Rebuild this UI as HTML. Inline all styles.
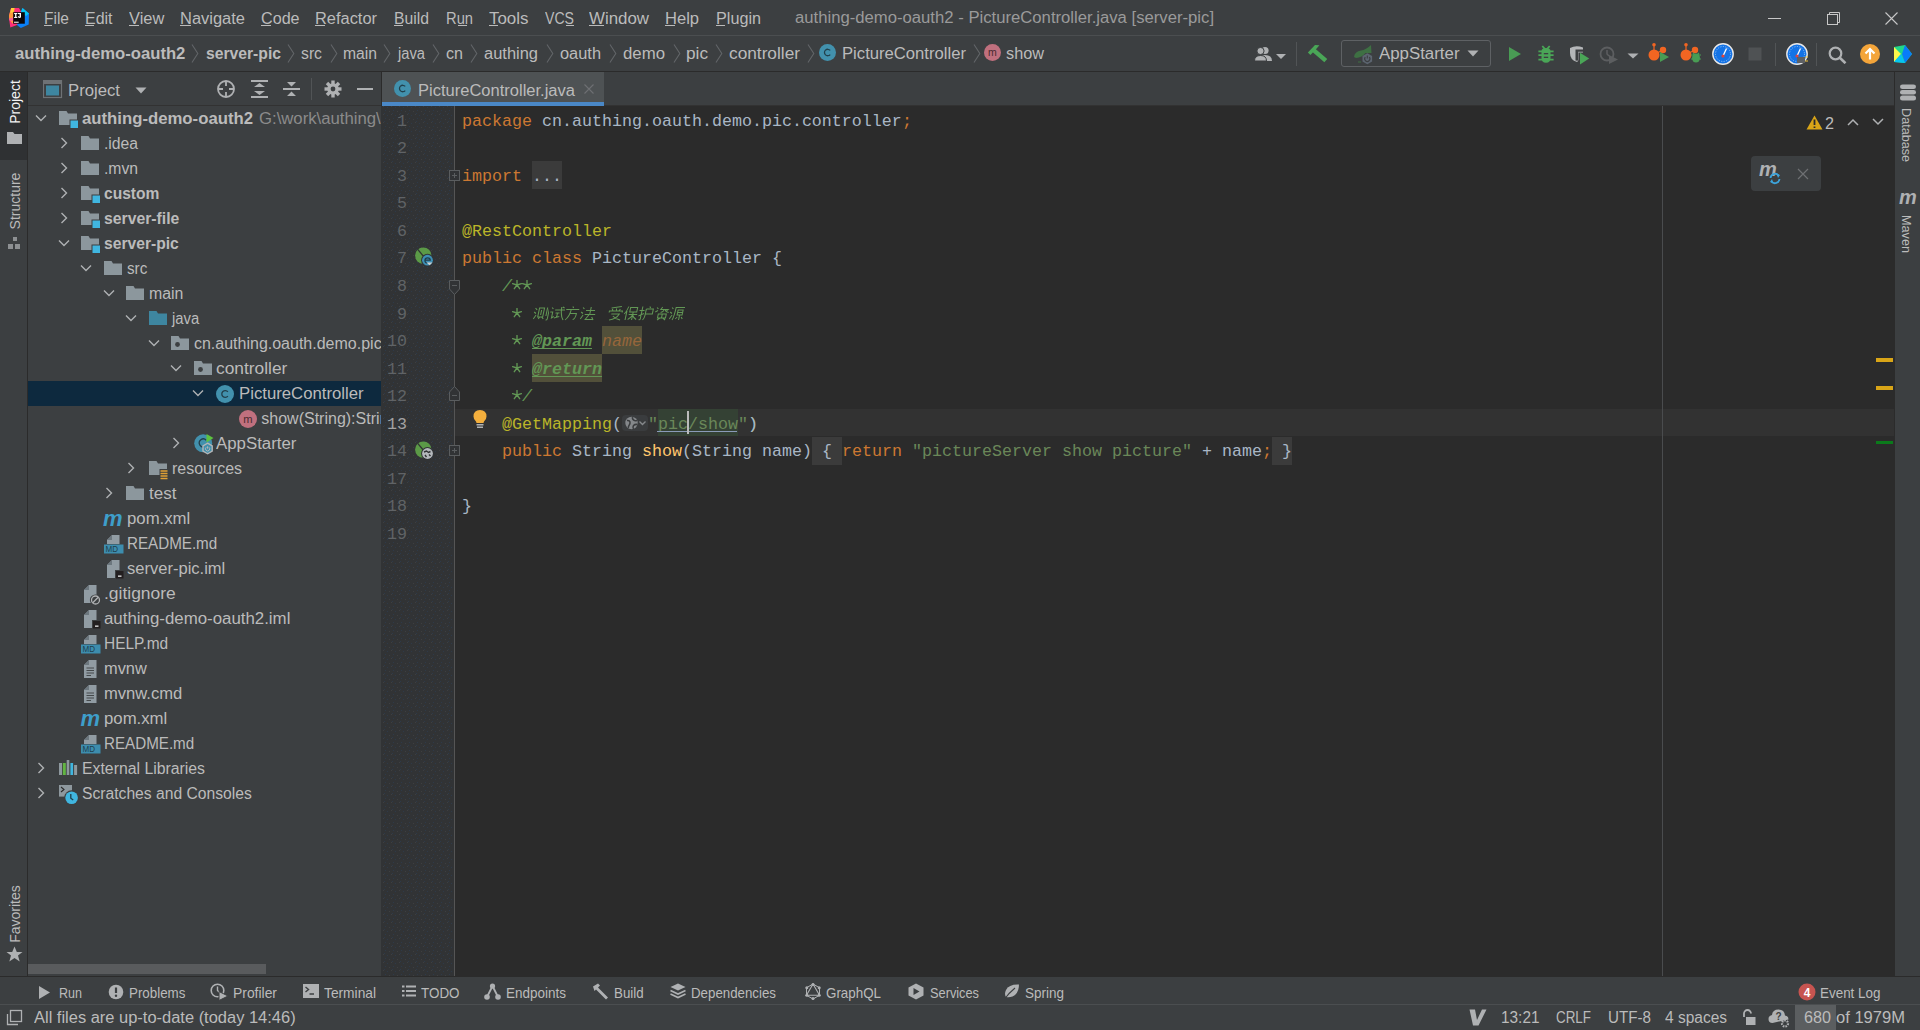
<!DOCTYPE html><html><head><meta charset="utf-8"><style>
*{margin:0;padding:0}
html,body{width:1920px;height:1030px;overflow:hidden;background:#3C3F41}
.t{position:absolute;white-space:pre;transform-origin:0 0}
</style></head><body>
<div style="position:absolute;left:0px;top:0px;width:1920px;height:1030px;background:#3C3F41;"></div>
<div style="position:absolute;left:0px;top:35px;width:1920px;height:1px;background:#4B4E50;"></div>
<div style="position:absolute;left:0px;top:71px;width:1920px;height:1px;background:#2B2B2B;"></div>
<div style="position:absolute;left:0px;top:72px;width:27px;height:88px;background:#2F3133;"></div>
<div style="position:absolute;left:27px;top:72px;width:1px;height:905px;background:#2B2B2B;"></div>
<div style="position:absolute;left:28px;top:105px;width:353px;height:1px;background:#323232;"></div>
<div style="position:absolute;left:381px;top:72px;width:1px;height:34px;background:#2B2B2B;"></div>
<div style="position:absolute;left:382px;top:72px;width:222px;height:30px;background:#4E5254;"></div>
<div style="position:absolute;left:382px;top:102px;width:222px;height:4px;background:#4A88C7;"></div>
<div style="position:absolute;left:604px;top:105px;width:1290px;height:1px;background:#323232;"></div>
<div style="position:absolute;left:381px;top:106px;width:73px;height:870px;background:#313335;"></div>
<svg style="position:absolute;left:383px;top:106px;" width="70" height="870" viewBox="0 0 70 870"><defs><pattern id="gd" width="8" height="8" patternUnits="userSpaceOnUse"><rect x="0" y="0" width="1" height="1" fill="#3E3F41"/><rect x="4" y="1" width="1" height="1" fill="#2E3A49"/><rect x="2" y="4" width="1" height="1" fill="#2E3A49"/><rect x="6" y="5" width="1" height="1" fill="#3E3F41"/><rect x="1" y="7" width="1" height="1" fill="#2E3A49"/></pattern></defs><rect width="70" height="870" fill="url(#gd)"/></svg>
<div style="position:absolute;left:454px;top:106px;width:1px;height:870px;background:#555555;"></div>
<div style="position:absolute;left:455px;top:106px;width:1439px;height:870px;background:#2B2B2B;"></div>
<div style="position:absolute;left:455px;top:409px;width:1439px;height:27px;background:#323232;"></div>
<div style="position:absolute;left:1662px;top:106px;width:1px;height:870px;background:#4A4C4E;"></div>
<div style="position:absolute;left:1894px;top:72px;width:1px;height:905px;background:#2B2B2B;"></div>
<div style="position:absolute;left:0px;top:976px;width:1920px;height:1px;background:#2B2B2B;"></div>
<div style="position:absolute;left:0px;top:1004px;width:1920px;height:1px;background:#4B4E50;"></div>
<div style="position:absolute;left:28px;top:964px;width:238px;height:10px;background:#595B5D;"></div>
<svg style="position:absolute;left:4px;top:4px;" width="30" height="28" viewBox="0 0 30 28">
<polygon points="7.1,4.1 15,4.1 17.5,8.2 17,21 13,21 6.3,23.6 5.2,15.5 5,11.4" fill="#FE2E7A"/>
<polygon points="7.1,4.1 11,4.1 9.8,9 9,20 5.2,15.5 5,11.4" fill="#FF9B3B"/>
<polygon points="7.2,4.1 10,4.1 9.5,8 6.5,9" fill="#FFCF3A"/>
<polygon points="5.2,14.5 8.8,13.5 9,17 5.2,16.5" fill="#FF3FC0" opacity="0.7"/>
<polygon points="18.5,4.1 25,9.5 24.7,20.4 16.8,23.9 13,21 16.8,8.2" fill="#0A80F8"/>
<polygon points="18.5,4.1 25,9.5 22,12 16.8,8.2" fill="#07C3F2"/>
<rect x="9.2" y="8.2" width="11.6" height="11.5" fill="#0C0708"/>
<g fill="#fff"><rect x="10.1" y="9" width="3.2" height="1.1"/><rect x="11.1" y="9" width="1.3" height="5"/><rect x="10.1" y="12.9" width="3.2" height="1.1"/><rect x="13.9" y="9" width="3" height="1.1"/><rect x="15.6" y="9" width="1.4" height="4.2"/><path d="M13.8 12.2H15V12.8H15.6V12.5H17Q17 14 15.4 14Q13.8 14 13.8 12.2Z"/></g>
<rect x="10" y="17.7" width="4.7" height="1.05" fill="#fff"/>
</svg>
<div class="t" id="t0" style="left:44px;top:11px;font-size:16px;line-height:16px;color:#BBBBBB;font-weight:normal;font-family:'Liberation Sans', sans-serif;transform:scaleX(0.9697);">File</div>
<div class="t" id="t1" style="left:85px;top:11px;font-size:16px;line-height:16px;color:#BBBBBB;font-weight:normal;font-family:'Liberation Sans', sans-serif;transform:scaleX(0.9972);">Edit</div>
<div class="t" id="t2" style="left:128.75px;top:11px;font-size:16px;line-height:16px;color:#BBBBBB;font-weight:normal;font-family:'Liberation Sans', sans-serif;transform:scaleX(1.0250);">View</div>
<div class="t" id="t3" style="left:180px;top:11px;font-size:16px;line-height:16px;color:#BBBBBB;font-weight:normal;font-family:'Liberation Sans', sans-serif;transform:scaleX(1.0292);">Navigate</div>
<div class="t" id="t4" style="left:261px;top:11px;font-size:16px;line-height:16px;color:#BBBBBB;font-weight:normal;font-family:'Liberation Sans', sans-serif;transform:scaleX(1.0092);">Code</div>
<div class="t" id="t5" style="left:315px;top:11px;font-size:16px;line-height:16px;color:#BBBBBB;font-weight:normal;font-family:'Liberation Sans', sans-serif;transform:scaleX(1.0253);">Refactor</div>
<div class="t" id="t6" style="left:394px;top:11px;font-size:16px;line-height:16px;color:#BBBBBB;font-weight:normal;font-family:'Liberation Sans', sans-serif;transform:scaleX(0.9838);">Build</div>
<div class="t" id="t7" style="left:446px;top:11px;font-size:16px;line-height:16px;color:#BBBBBB;font-weight:normal;font-family:'Liberation Sans', sans-serif;transform:scaleX(0.9196);">Run</div>
<div class="t" id="t8" style="left:489px;top:11px;font-size:16px;line-height:16px;color:#BBBBBB;font-weight:normal;font-family:'Liberation Sans', sans-serif;transform:scaleX(1.0573);">Tools</div>
<div class="t" id="t9" style="left:545px;top:11px;font-size:16px;line-height:16px;color:#BBBBBB;font-weight:normal;font-family:'Liberation Sans', sans-serif;transform:scaleX(0.8813);">VCS</div>
<div class="t" id="t10" style="left:589px;top:11px;font-size:16px;line-height:16px;color:#BBBBBB;font-weight:normal;font-family:'Liberation Sans', sans-serif;transform:scaleX(1.0544);">Window</div>
<div class="t" id="t11" style="left:665px;top:11px;font-size:16px;line-height:16px;color:#BBBBBB;font-weight:normal;font-family:'Liberation Sans', sans-serif;transform:scaleX(1.0332);">Help</div>
<div class="t" id="t12" style="left:716px;top:11px;font-size:16px;line-height:16px;color:#BBBBBB;font-weight:normal;font-family:'Liberation Sans', sans-serif;transform:scaleX(1.0116);">Plugin</div>
<div style="position:absolute;left:44px;top:25px;width:8px;height:1px;background:#BBBBBB;"></div>
<div style="position:absolute;left:85px;top:25px;width:9px;height:1px;background:#BBBBBB;"></div>
<div style="position:absolute;left:129px;top:25px;width:10px;height:1px;background:#BBBBBB;"></div>
<div style="position:absolute;left:180px;top:25px;width:11px;height:1px;background:#BBBBBB;"></div>
<div style="position:absolute;left:261px;top:25px;width:10px;height:1px;background:#BBBBBB;"></div>
<div style="position:absolute;left:315px;top:25px;width:10px;height:1px;background:#BBBBBB;"></div>
<div style="position:absolute;left:394px;top:25px;width:9px;height:1px;background:#BBBBBB;"></div>
<div style="position:absolute;left:458px;top:25px;width:9px;height:1px;background:#BBBBBB;"></div>
<div style="position:absolute;left:489px;top:25px;width:9px;height:1px;background:#BBBBBB;"></div>
<div style="position:absolute;left:566px;top:25px;width:8px;height:1px;background:#BBBBBB;"></div>
<div style="position:absolute;left:589px;top:25px;width:15px;height:1px;background:#BBBBBB;"></div>
<div style="position:absolute;left:665px;top:25px;width:10px;height:1px;background:#BBBBBB;"></div>
<div style="position:absolute;left:716px;top:25px;width:9px;height:1px;background:#BBBBBB;"></div>
<div class="t" id="t13" style="left:795px;top:10px;font-size:16px;line-height:16px;color:#9A9A9A;font-weight:normal;font-family:'Liberation Sans', sans-serif;transform:scaleX(1.0424);">authing-demo-oauth2 - PictureController.java [server-pic]</div>
<div style="position:absolute;left:1768px;top:18px;width:13px;height:1px;background:#C8C8C8;"></div>
<svg style="position:absolute;left:1826px;top:11px;" width="15" height="15" viewBox="0 0 15 15"><rect x="1.5" y="3.5" width="10" height="10" fill="none" stroke="#C8C8C8" stroke-width="1"/><path d="M3.5 3.5V1.5H13.5V11.5H11.5" fill="none" stroke="#C8C8C8" stroke-width="1"/></svg>
<svg style="position:absolute;left:1884px;top:11px;" width="15" height="15" viewBox="0 0 15 15"><path d="M1.5 1.5L13.5 13.5M13.5 1.5L1.5 13.5" stroke="#C8C8C8" stroke-width="1.1"/></svg>
<div class="t" id="t14" style="left:15px;top:46px;font-size:16px;line-height:16px;color:#BBBBBB;font-weight:bold;font-family:'Liberation Sans', sans-serif;transform:scaleX(1.0419);">authing-demo-oauth2</div>
<div class="t" id="t15" style="left:206px;top:46px;font-size:16px;line-height:16px;color:#BBBBBB;font-weight:bold;font-family:'Liberation Sans', sans-serif;transform:scaleX(0.9804);">server-pic</div>
<div class="t" id="t16" style="left:301px;top:46px;font-size:16px;line-height:16px;color:#BBBBBB;font-weight:normal;font-family:'Liberation Sans', sans-serif;transform:scaleX(0.9846);">src</div>
<div class="t" id="t17" style="left:343px;top:46px;font-size:16px;line-height:16px;color:#BBBBBB;font-weight:normal;font-family:'Liberation Sans', sans-serif;transform:scaleX(0.9802);">main</div>
<div class="t" id="t18" style="left:398px;top:46px;font-size:16px;line-height:16px;color:#BBBBBB;font-weight:normal;font-family:'Liberation Sans', sans-serif;transform:scaleX(0.9196);">java</div>
<div class="t" id="t19" style="left:446px;top:46px;font-size:16px;line-height:16px;color:#BBBBBB;font-weight:normal;font-family:'Liberation Sans', sans-serif;transform:scaleX(1.0055);">cn</div>
<div class="t" id="t20" style="left:484px;top:46px;font-size:16px;line-height:16px;color:#BBBBBB;font-weight:normal;font-family:'Liberation Sans', sans-serif;transform:scaleX(1.0286);">authing</div>
<div class="t" id="t21" style="left:560px;top:46px;font-size:16px;line-height:16px;color:#BBBBBB;font-weight:normal;font-family:'Liberation Sans', sans-serif;transform:scaleX(1.0238);">oauth</div>
<div class="t" id="t22" style="left:623px;top:46px;font-size:16px;line-height:16px;color:#BBBBBB;font-weight:normal;font-family:'Liberation Sans', sans-serif;transform:scaleX(1.0492);">demo</div>
<div class="t" id="t23" style="left:686px;top:46px;font-size:16px;line-height:16px;color:#BBBBBB;font-weight:normal;font-family:'Liberation Sans', sans-serif;transform:scaleX(1.0756);">pic</div>
<div class="t" id="t24" style="left:729px;top:46px;font-size:16px;line-height:16px;color:#BBBBBB;font-weight:normal;font-family:'Liberation Sans', sans-serif;transform:scaleX(1.0788);">controller</div>
<svg style="position:absolute;left:190.5px;top:43px;" width="9" height="21" viewBox="0 0 9 21"><path d="M1 1.5L6.8 10.5L1 19.5" fill="none" stroke="#626568" stroke-width="1.1"/></svg>
<svg style="position:absolute;left:286.5px;top:43px;" width="9" height="21" viewBox="0 0 9 21"><path d="M1 1.5L6.8 10.5L1 19.5" fill="none" stroke="#626568" stroke-width="1.1"/></svg>
<svg style="position:absolute;left:329.5px;top:43px;" width="9" height="21" viewBox="0 0 9 21"><path d="M1 1.5L6.8 10.5L1 19.5" fill="none" stroke="#626568" stroke-width="1.1"/></svg>
<svg style="position:absolute;left:382.5px;top:43px;" width="9" height="21" viewBox="0 0 9 21"><path d="M1 1.5L6.8 10.5L1 19.5" fill="none" stroke="#626568" stroke-width="1.1"/></svg>
<svg style="position:absolute;left:431.5px;top:43px;" width="9" height="21" viewBox="0 0 9 21"><path d="M1 1.5L6.8 10.5L1 19.5" fill="none" stroke="#626568" stroke-width="1.1"/></svg>
<svg style="position:absolute;left:470.0px;top:43px;" width="9" height="21" viewBox="0 0 9 21"><path d="M1 1.5L6.8 10.5L1 19.5" fill="none" stroke="#626568" stroke-width="1.1"/></svg>
<svg style="position:absolute;left:546.0px;top:43px;" width="9" height="21" viewBox="0 0 9 21"><path d="M1 1.5L6.8 10.5L1 19.5" fill="none" stroke="#626568" stroke-width="1.1"/></svg>
<svg style="position:absolute;left:608.5px;top:43px;" width="9" height="21" viewBox="0 0 9 21"><path d="M1 1.5L6.8 10.5L1 19.5" fill="none" stroke="#626568" stroke-width="1.1"/></svg>
<svg style="position:absolute;left:672.5px;top:43px;" width="9" height="21" viewBox="0 0 9 21"><path d="M1 1.5L6.8 10.5L1 19.5" fill="none" stroke="#626568" stroke-width="1.1"/></svg>
<svg style="position:absolute;left:714.5px;top:43px;" width="9" height="21" viewBox="0 0 9 21"><path d="M1 1.5L6.8 10.5L1 19.5" fill="none" stroke="#626568" stroke-width="1.1"/></svg>
<svg style="position:absolute;left:806.5px;top:43px;" width="9" height="21" viewBox="0 0 9 21"><path d="M1 1.5L6.8 10.5L1 19.5" fill="none" stroke="#626568" stroke-width="1.1"/></svg>
<svg style="position:absolute;left:972.5px;top:43px;" width="9" height="21" viewBox="0 0 9 21"><path d="M1 1.5L6.8 10.5L1 19.5" fill="none" stroke="#626568" stroke-width="1.1"/></svg>
<svg style="position:absolute;left:819px;top:44px;" width="17" height="17" viewBox="0 0 17 17"><circle cx="8.5" cy="8.5" r="8.5" fill="#4291AD"/><path d="M11.22 6.46A3.23 3.23 0 1 0 11.22 10.54" fill="none" stroke="#22404C" stroke-width="1.3"/></svg>
<div class="t" id="t25" style="left:842px;top:46px;font-size:16px;line-height:16px;color:#BBBBBB;font-weight:normal;font-family:'Liberation Sans', sans-serif;transform:scaleX(1.0407);">PictureController</div>
<svg style="position:absolute;left:984px;top:44px;" width="17" height="17" viewBox="0 0 17 17"><circle cx="8.5" cy="8.5" r="8.5" fill="#C0707E"/><text x="8.5" y="11.899999999999999" text-anchor="middle" font-family="Liberation Sans" font-size="10.54" fill="#4A2A30">m</text></svg>
<div class="t" id="t26" style="left:1006px;top:46px;font-size:16px;line-height:16px;color:#BBBBBB;font-weight:normal;font-family:'Liberation Sans', sans-serif;transform:scaleX(1.0171);">show</div>
<svg style="position:absolute;left:1254px;top:46px;" width="34" height="16" viewBox="0 0 34 16">
<circle cx="11" cy="4.5" r="3.6" fill="#AFB1B3"/><path d="M4 15 Q4 9 11 9 Q18 9 18 15Z" fill="#AFB1B3"/>
<circle cx="6.5" cy="5" r="3.6" fill="#AFB1B3" stroke="#3C3F41" stroke-width="1"/><path d="M0.5 15 Q0.5 9.5 6.5 9.5 Q12.5 9.5 12.5 15Z" fill="#AFB1B3" stroke="#3C3F41" stroke-width="1"/>
<path d="M22 8H32L27 13Z" fill="#AFB1B3"/></svg>
<div style="position:absolute;left:1296px;top:42px;width:1px;height:24px;background:#515456;"></div>
<svg style="position:absolute;left:1300px;top:38px;" width="30" height="30" viewBox="0 0 30 30"><path d="M7.9 14.4L15 7.1L19.4 7.3L16.2 10.9L10.4 16.9Z" fill="#4AA657"/><path d="M13.3 11.8L25.8 22.6" stroke="#4AA657" stroke-width="4.4"/></svg>
<div style="position:absolute;left:1341px;top:40px;width:148px;height:25px;border:1px solid #5E6164;border-radius:3px"></div>
<svg style="position:absolute;left:1350px;top:44px;" width="26" height="24" viewBox="0 0 26 24"><path d="M4 13Q4.5 7.5 11 6.5Q16 5.8 21 1L21.5 9H15.5Q12 13.5 6 14Z" fill="#3E7043"/><path d="M8 18H11" stroke="#3E7043" stroke-width="1"/><polygon points="17.3,9.3 22.1,12.05 22.1,17.55 17.3,20.3 12.5,17.55 12.5,12.05" fill="#5C6570"/><path d="M15.3 13.2A2.6 2.6 0 1 0 19.3 13.2" fill="none" stroke="#3C3F41" stroke-width="1.1"/><path d="M17.3 11.5V14.6" stroke="#3C3F41" stroke-width="1.1"/></svg>
<div class="t" id="t27" style="left:1378.5px;top:46px;font-size:16px;line-height:16px;color:#BBBBBB;font-weight:normal;font-family:'Liberation Sans', sans-serif;transform:scaleX(1.0525);">AppStarter</div>
<svg style="position:absolute;left:1467px;top:50px;" width="12" height="7" viewBox="0 0 12 7"><path d="M0.5 0.5H11.5L6 6.5Z" fill="#AFB1B3"/></svg>
<svg style="position:absolute;left:1508px;top:46px;" width="14" height="16" viewBox="0 0 14 16"><path d="M1 1L13 8L1 15Z" fill="#499C54"/></svg>
<svg style="position:absolute;left:1536px;top:45px;" width="20" height="20" viewBox="0 0 20 20"><path d="M6.3 1L9.2 4.3M13.7 1L10.8 4.3" stroke="#4AA657" stroke-width="1.8"/><path d="M2.4 6.4H17.6M2.4 10.2H17.6M2.4 14.6H17.6" stroke="#4AA657" stroke-width="1.8"/><path d="M5.5 6Q5.5 3 10 3Q14.5 3 14.5 6V13Q14.5 17.8 10 17.8Q5.5 17.8 5.5 13Z" fill="#4AA657"/><rect x="7.8" y="8" width="4.4" height="1.3" fill="#3C3F41"/><rect x="7.8" y="11.7" width="4.4" height="1.3" fill="#3C3F41"/></svg>
<svg style="position:absolute;left:1569px;top:45px;" width="22" height="21" viewBox="0 0 22 21"><path d="M1 3Q7 0 14 2.5V7.5H9.5V14.5Q9.5 16 8 17Q1 15 1 8Z" fill="#B4B6B8"/><path d="M6.5 4.5H14V6.5H9.2V15.5H6.5Z" fill="#3C3F41"/><path d="M7.5 5.5H14V6.5H8.5V15.5H7.5Z" fill="#3C3F41"/><path d="M11 7.8L20.2 13.6L11 19.5Z" fill="#4AA657"/></svg>
<svg style="position:absolute;left:1599px;top:46px;" width="20" height="18" viewBox="0 0 20 18"><circle cx="8" cy="8" r="6.5" fill="none" stroke="#5C5E60" stroke-width="1.8"/><path d="M8 4V8L10 10" stroke="#5C5E60" stroke-width="1.5" fill="none"/>
<path d="M10 9L19 13.5L10 18Z" fill="#5C5E60"/></svg>
<svg style="position:absolute;left:1627px;top:53px;" width="12" height="6" viewBox="0 0 12 6"><path d="M0.5 0.5H11.5L6 5.5Z" fill="#AFB1B3"/></svg>
<svg style="position:absolute;left:1648px;top:43px;" width="22" height="21" viewBox="0 0 22 21"><circle cx="6" cy="1.8" r="1.8" fill="#F26522"/><path d="M6 2V8" stroke="#F26522" stroke-width="1.2"/>
<circle cx="6" cy="12" r="5.5" fill="#F26522"/><circle cx="15" cy="7" r="3.2" fill="#F26522"/><path d="M9 10L13 8" stroke="#F26522" stroke-width="1.2"/><path d="M12 9L21 14L12 19Z" fill="#499C54"/></svg>
<svg style="position:absolute;left:1680px;top:43px;" width="22" height="21" viewBox="0 0 22 21"><circle cx="6" cy="1.8" r="1.8" fill="#F26522"/><path d="M6 2V8" stroke="#F26522" stroke-width="1.2"/>
<circle cx="6" cy="12" r="5.5" fill="#F26522"/><circle cx="15" cy="7" r="3.2" fill="#F26522"/><path d="M9 10L13 8" stroke="#F26522" stroke-width="1.2"/><ellipse cx="16" cy="15" rx="4" ry="4.5" fill="#499C54"/><path d="M11 12H21M11 16H21M13 10L15 12M19 10L17 12" stroke="#499C54" stroke-width="1.2"/></svg>
<svg style="position:absolute;left:1712px;top:43px;" width="22" height="22" viewBox="0 0 22 22"><circle cx="11" cy="11" r="10.2" fill="#1473E6" stroke="#E8E8E8" stroke-width="1.4"/><circle cx="11" cy="11" r="7.5" fill="none" stroke="#9CC8F5" stroke-width="1" stroke-dasharray="1 1.5"/>
<path d="M11 13L14.5 5.5" stroke="#fff" stroke-width="1.3"/><circle cx="11" cy="13" r="1.6" fill="#E0433C"/></svg>
<svg style="position:absolute;left:1748px;top:47px;" width="14" height="14" viewBox="0 0 14 14"><rect x="0.5" y="0.5" width="13" height="13" fill="#4F5254"/></svg>
<div style="position:absolute;left:1775px;top:43px;width:1px;height:23px;background:#515456;"></div>
<svg style="position:absolute;left:1786px;top:43px;" width="22" height="22" viewBox="0 0 22 22"><circle cx="11" cy="11" r="10.2" fill="#1473E6" stroke="#E8E8E8" stroke-width="1.4"/><circle cx="11" cy="11" r="7.5" fill="none" stroke="#9CC8F5" stroke-width="1" stroke-dasharray="1 1.5"/>
<path d="M11 13L14.5 5.5" stroke="#fff" stroke-width="1.3"/><circle cx="11" cy="13" r="1.6" fill="#E0433C"/><rect x="11" y="14" width="8" height="6" fill="#5E6164"/><path d="M19 14H22M19 18H22" stroke="#F0C23C" stroke-width="1"/></svg>
<div style="position:absolute;left:1816px;top:43px;width:1px;height:23px;background:#515456;"></div>
<svg style="position:absolute;left:1828px;top:46px;" width="20" height="18" viewBox="0 0 20 18"><circle cx="7.5" cy="7.5" r="5.8" fill="none" stroke="#AFB1B3" stroke-width="2.2"/><path d="M11.8 11.8L17.5 17.2" stroke="#AFB1B3" stroke-width="2.6"/></svg>
<svg style="position:absolute;left:1859px;top:43px;" width="22" height="22" viewBox="0 0 22 22"><circle cx="11" cy="11" r="10" fill="#F4A53A"/><path d="M11 16.5V6.5M6.5 10.5L11 6L15.5 10.5" stroke="#fff" stroke-width="2.2" fill="none"/></svg>
<svg style="position:absolute;left:1893px;top:45px;" width="20" height="19" viewBox="0 0 20 19"><path d="M1 2L12 0L19 9L12 18L1 17Z" fill="#21D789"/><path d="M1 2L8 9L1 17Z" fill="#FCF84A"/><path d="M12 0L19 9L12 18L9 9Z" fill="#087CFA"/><path d="M8 9L12 18L1 17Z" fill="#07C3F2"/></svg>
<div style="position:absolute;left:15px;top:102px;width:0;height:0"><div class="t" id="t28" style="left:0;top:0;font-size:14px;line-height:14px;color:#F4F4F4;font-family:'Liberation Sans', sans-serif;transform-origin:0 0;transform:rotate(-90deg) translate(-50%,-50%) ">Project</div></div>
<svg style="position:absolute;left:7px;top:132px;" width="15" height="12" viewBox="0 0 15 12"><path d="M0 0H6L7.5 2H15V12H0Z" fill="#AFB1B3"/></svg>
<div style="position:absolute;left:15px;top:200.5px;width:0;height:0"><div class="t" id="t29" style="left:0;top:0;font-size:14px;line-height:14px;color:#BBBBBB;font-family:'Liberation Sans', sans-serif;transform-origin:0 0;transform:rotate(-90deg) translate(-50%,-50%) ">Structure</div></div>
<svg style="position:absolute;left:8px;top:237px;" width="13" height="13" viewBox="0 0 13 13"><rect x="5" y="0" width="4" height="4" fill="#8D9092"/><rect x="0" y="7" width="5" height="5" fill="#8D9092"/><rect x="7" y="7" width="5" height="5" fill="#8D9092"/></svg>
<div style="position:absolute;left:15px;top:913.5px;width:0;height:0"><div class="t" id="t30" style="left:0;top:0;font-size:14px;line-height:14px;color:#BBBBBB;font-family:'Liberation Sans', sans-serif;transform-origin:0 0;transform:rotate(-90deg) translate(-50%,-50%) ">Favorites</div></div>
<svg style="position:absolute;left:6px;top:946px;" width="17" height="17" viewBox="0 0 17 17"><path d="M8.5 0.5L10.8 6H16.5L12 9.6L13.7 15.5L8.5 12L3.3 15.5L5 9.6L0.5 6H6.2Z" fill="#AFB1B3"/></svg>
<svg style="position:absolute;left:43px;top:80px;" width="20" height="19" viewBox="0 0 20 19"><rect x="0.5" y="0.5" width="18" height="17" fill="none" stroke="#6E7275" stroke-width="1.2"/><rect x="1" y="1" width="17" height="3" fill="#6E7275"/><rect x="3" y="5.5" width="13" height="10" fill="#3E86A0"/></svg>
<div class="t" id="t31" style="left:68px;top:83px;font-size:16px;line-height:16px;color:#BBBBBB;font-weight:normal;font-family:'Liberation Sans', sans-serif;transform:scaleX(1.0442);">Project</div>
<svg style="position:absolute;left:135px;top:87px;" width="12" height="7" viewBox="0 0 12 7"><path d="M0.5 0.5H11.5L6 6.5Z" fill="#AFB1B3"/></svg>
<svg style="position:absolute;left:216px;top:79px;" width="20" height="20" viewBox="0 0 20 20"><circle cx="10" cy="10" r="8" fill="none" stroke="#AFB1B3" stroke-width="1.8"/><path d="M10 2V7M10 13V18M2 10H7M13 10H18" stroke="#AFB1B3" stroke-width="1.8"/></svg>
<svg style="position:absolute;left:251px;top:80px;" width="17" height="18" viewBox="0 0 17 18"><path d="M0 1H17M0 17H17" stroke="#AFB1B3" stroke-width="2"/><path d="M3 7L8.5 3L14 7Z M3 11L8.5 15L14 11Z" fill="#AFB1B3"/></svg>
<svg style="position:absolute;left:283px;top:80px;" width="17" height="18" viewBox="0 0 17 18"><path d="M0 9H17" stroke="#AFB1B3" stroke-width="2"/><path d="M4 2L8.5 6.5L13 2Z M4 16L8.5 11.5L13 16Z" fill="#AFB1B3"/></svg>
<div style="position:absolute;left:311px;top:78px;width:1px;height:22px;background:#515456;"></div>
<svg style="position:absolute;left:324px;top:80px;" width="18" height="18" viewBox="0 0 18 18"><g fill="#AFB1B3"><circle cx="9" cy="9" r="5.8"/>
<rect x="7.3" y="0.5" width="3.4" height="17" /><rect x="0.5" y="7.3" width="17" height="3.4"/>
<rect x="7.3" y="0.5" width="3.4" height="17" transform="rotate(45 9 9)"/><rect x="7.3" y="0.5" width="3.4" height="17" transform="rotate(-45 9 9)"/></g>
<circle cx="9" cy="9" r="2.4" fill="#3C3F41"/></svg>
<div style="position:absolute;left:357px;top:88px;width:16px;height:2px;background:#AFB1B3;"></div>
<div style="position:absolute;left:28px;top:381px;width:353px;height:25px;background:#0D293E;"></div>
<svg style="position:absolute;left:35.3px;top:114px;" width="12" height="8" viewBox="0 0 12 8"><path d="M1 1.5L6 6.5L11 1.5" fill="none" stroke="#AFB1B3" stroke-width="1.4"/></svg>
<svg style="position:absolute;left:59.0px;top:111px;" width="20" height="19" viewBox="0 0 20 19"><path d="M0 0H7.5L9 2.5H18V14H0Z" fill="#8C979D"/><rect x="10.5" y="8.5" width="9" height="9" fill="#3C3F41"/><rect x="11.5" y="9.5" width="7.5" height="7.5" fill="#40B6E0"/></svg>
<div class="t" id="t32" style="left:81.7px;top:111px;font-size:16px;line-height:16px;color:#BBBBBB;font-weight:bold;font-family:'Liberation Sans', sans-serif;transform:scaleX(1.0456);">authing-demo-oauth2</div>
<svg style="position:absolute;left:59.75px;top:137px;" width="8" height="12" viewBox="0 0 8 12"><path d="M1.5 1L6.5 6L1.5 11" fill="none" stroke="#AFB1B3" stroke-width="1.4"/></svg>
<svg style="position:absolute;left:81.45px;top:136px;" width="20" height="19" viewBox="0 0 20 19"><path d="M0 0H7.5L9 2.5H18V14H0Z" fill="#8C979D"/></svg>
<div class="t" id="t33" style="left:104.15px;top:136px;font-size:16px;line-height:16px;color:#BBBBBB;font-weight:normal;font-family:'Liberation Sans', sans-serif;transform:scaleX(0.9826);">.idea</div>
<svg style="position:absolute;left:59.75px;top:162px;" width="8" height="12" viewBox="0 0 8 12"><path d="M1.5 1L6.5 6L1.5 11" fill="none" stroke="#AFB1B3" stroke-width="1.4"/></svg>
<svg style="position:absolute;left:81.45px;top:161px;" width="20" height="19" viewBox="0 0 20 19"><path d="M0 0H7.5L9 2.5H18V14H0Z" fill="#8C979D"/></svg>
<div class="t" id="t34" style="left:104.15px;top:161px;font-size:16px;line-height:16px;color:#BBBBBB;font-weight:normal;font-family:'Liberation Sans', sans-serif;transform:scaleX(0.9835);">.mvn</div>
<svg style="position:absolute;left:59.75px;top:187px;" width="8" height="12" viewBox="0 0 8 12"><path d="M1.5 1L6.5 6L1.5 11" fill="none" stroke="#AFB1B3" stroke-width="1.4"/></svg>
<svg style="position:absolute;left:81.45px;top:186px;" width="20" height="19" viewBox="0 0 20 19"><path d="M0 0H7.5L9 2.5H18V14H0Z" fill="#8C979D"/><rect x="10.5" y="8.5" width="9" height="9" fill="#3C3F41"/><rect x="11.5" y="9.5" width="7.5" height="7.5" fill="#40B6E0"/></svg>
<div class="t" id="t35" style="left:104.15px;top:186px;font-size:16px;line-height:16px;color:#BBBBBB;font-weight:bold;font-family:'Liberation Sans', sans-serif;transform:scaleX(0.9735);">custom</div>
<svg style="position:absolute;left:59.75px;top:212px;" width="8" height="12" viewBox="0 0 8 12"><path d="M1.5 1L6.5 6L1.5 11" fill="none" stroke="#AFB1B3" stroke-width="1.4"/></svg>
<svg style="position:absolute;left:81.45px;top:211px;" width="20" height="19" viewBox="0 0 20 19"><path d="M0 0H7.5L9 2.5H18V14H0Z" fill="#8C979D"/><rect x="10.5" y="8.5" width="9" height="9" fill="#3C3F41"/><rect x="11.5" y="9.5" width="7.5" height="7.5" fill="#40B6E0"/></svg>
<div class="t" id="t36" style="left:104.15px;top:211px;font-size:16px;line-height:16px;color:#BBBBBB;font-weight:bold;font-family:'Liberation Sans', sans-serif;transform:scaleX(0.9856);">server-file</div>
<svg style="position:absolute;left:57.75px;top:239px;" width="12" height="8" viewBox="0 0 12 8"><path d="M1 1.5L6 6.5L11 1.5" fill="none" stroke="#AFB1B3" stroke-width="1.4"/></svg>
<svg style="position:absolute;left:81.45px;top:236px;" width="20" height="19" viewBox="0 0 20 19"><path d="M0 0H7.5L9 2.5H18V14H0Z" fill="#8C979D"/><rect x="10.5" y="8.5" width="9" height="9" fill="#3C3F41"/><rect x="11.5" y="9.5" width="7.5" height="7.5" fill="#40B6E0"/></svg>
<div class="t" id="t37" style="left:104.15px;top:236px;font-size:16px;line-height:16px;color:#BBBBBB;font-weight:bold;font-family:'Liberation Sans', sans-serif;transform:scaleX(0.9778);">server-pic</div>
<svg style="position:absolute;left:80.19999999999999px;top:264px;" width="12" height="8" viewBox="0 0 12 8"><path d="M1 1.5L6 6.5L11 1.5" fill="none" stroke="#AFB1B3" stroke-width="1.4"/></svg>
<svg style="position:absolute;left:103.9px;top:261px;" width="20" height="19" viewBox="0 0 20 19"><path d="M0 0H7.5L9 2.5H18V14H0Z" fill="#8C979D"/></svg>
<div class="t" id="t38" style="left:126.6px;top:261px;font-size:16px;line-height:16px;color:#BBBBBB;font-weight:normal;font-family:'Liberation Sans', sans-serif;transform:scaleX(0.9518);">src</div>
<svg style="position:absolute;left:102.64999999999999px;top:289px;" width="12" height="8" viewBox="0 0 12 8"><path d="M1 1.5L6 6.5L11 1.5" fill="none" stroke="#AFB1B3" stroke-width="1.4"/></svg>
<svg style="position:absolute;left:126.35px;top:286px;" width="20" height="19" viewBox="0 0 20 19"><path d="M0 0H7.5L9 2.5H18V14H0Z" fill="#8C979D"/></svg>
<div class="t" id="t39" style="left:149.05px;top:286px;font-size:16px;line-height:16px;color:#BBBBBB;font-weight:normal;font-family:'Liberation Sans', sans-serif;transform:scaleX(0.9917);">main</div>
<svg style="position:absolute;left:125.1px;top:314px;" width="12" height="8" viewBox="0 0 12 8"><path d="M1 1.5L6 6.5L11 1.5" fill="none" stroke="#AFB1B3" stroke-width="1.4"/></svg>
<svg style="position:absolute;left:148.8px;top:311px;" width="20" height="19" viewBox="0 0 20 19"><path d="M0 0H7.5L9 2.5H18V14H0Z" fill="#3E86A0"/></svg>
<div class="t" id="t40" style="left:171.5px;top:311px;font-size:16px;line-height:16px;color:#BBBBBB;font-weight:normal;font-family:'Liberation Sans', sans-serif;transform:scaleX(0.9265);">java</div>
<svg style="position:absolute;left:147.55px;top:339px;" width="12" height="8" viewBox="0 0 12 8"><path d="M1 1.5L6 6.5L11 1.5" fill="none" stroke="#AFB1B3" stroke-width="1.4"/></svg>
<svg style="position:absolute;left:171.25px;top:336px;" width="20" height="19" viewBox="0 0 20 19"><path d="M0 0H7.5L9 2.5H18V14H0Z" fill="#8C979D"/><circle cx="6.5" cy="8.5" r="2.4" fill="#3C3F41"/></svg>
<div style="position:absolute;left:0;top:0;width:381px;height:1030px;overflow:hidden">
<div class="t" id="t41" style="left:193.95px;top:336px;font-size:16px;line-height:16px;color:#BBBBBB;font-weight:normal;font-family:'Liberation Sans', sans-serif;">cn.authing.oauth.demo.pic</div>
</div>
<svg style="position:absolute;left:170.0px;top:364px;" width="12" height="8" viewBox="0 0 12 8"><path d="M1 1.5L6 6.5L11 1.5" fill="none" stroke="#AFB1B3" stroke-width="1.4"/></svg>
<svg style="position:absolute;left:193.7px;top:361px;" width="20" height="19" viewBox="0 0 20 19"><path d="M0 0H7.5L9 2.5H18V14H0Z" fill="#8C979D"/><circle cx="6.5" cy="8.5" r="2.4" fill="#3C3F41"/></svg>
<div class="t" id="t42" style="left:216.39999999999998px;top:361px;font-size:16px;line-height:16px;color:#BBBBBB;font-weight:normal;font-family:'Liberation Sans', sans-serif;transform:scaleX(1.0849);">controller</div>
<svg style="position:absolute;left:192.45px;top:389px;" width="12" height="8" viewBox="0 0 12 8"><path d="M1 1.5L6 6.5L11 1.5" fill="none" stroke="#AFB1B3" stroke-width="1.4"/></svg>
<svg style="position:absolute;left:216.15px;top:385px;" width="18" height="18" viewBox="0 0 18 18"><circle cx="9.0" cy="9.0" r="9.0" fill="#4291AD"/><path d="M11.88 6.84A3.42 3.42 0 1 0 11.88 11.16" fill="none" stroke="#22404C" stroke-width="1.3"/></svg>
<div class="t" id="t43" style="left:238.85000000000002px;top:386px;font-size:16px;line-height:16px;color:#BBBBBB;font-weight:normal;font-family:'Liberation Sans', sans-serif;transform:scaleX(1.0457);">PictureController</div>
<svg style="position:absolute;left:238.6px;top:410px;" width="18" height="18" viewBox="0 0 18 18"><circle cx="9.0" cy="9.0" r="9.0" fill="#C0707E"/><text x="9.0" y="12.6" text-anchor="middle" font-family="Liberation Sans" font-size="11.16" fill="#4A2A30">m</text></svg>
<div style="position:absolute;left:0;top:0;width:381px;height:1030px;overflow:hidden">
<div class="t" id="t44" style="left:261.3px;top:411px;font-size:16px;line-height:16px;color:#BBBBBB;font-weight:normal;font-family:'Liberation Sans', sans-serif;">show(String):String</div>
</div>
<svg style="position:absolute;left:172.0px;top:437px;" width="8" height="12" viewBox="0 0 8 12"><path d="M1.5 1L6.5 6L1.5 11" fill="none" stroke="#AFB1B3" stroke-width="1.4"/></svg>
<svg style="position:absolute;left:193.7px;top:434px;" width="22" height="22" viewBox="0 0 22 22"><circle cx="9.2" cy="9.3" r="9" fill="#4291AD"/><path d="M12.2 6.2A4 4 0 1 0 11 12.6" fill="none" stroke="#22404C" stroke-width="1.3"/><path d="M12.5 0L19.5 4L12.5 8.5Z" fill="#5DC23F"/><polygon points="13.6,9.2 18.2,11.85 18.2,17.15 13.6,19.8 9,17.15 9,11.85" fill="#4291AD" stroke="#B4B6B8" stroke-width="1.4"/><path d="M12.2 13.3A2.1 2.1 0 1 0 15 13.3M13.6 12.3V14.6" stroke="#B4B6B8" stroke-width="1" fill="none"/></svg>
<div class="t" id="t45" style="left:216.39999999999998px;top:436px;font-size:16px;line-height:16px;color:#BBBBBB;font-weight:normal;font-family:'Liberation Sans', sans-serif;transform:scaleX(1.0512);">AppStarter</div>
<svg style="position:absolute;left:127.1px;top:462px;" width="8" height="12" viewBox="0 0 8 12"><path d="M1.5 1L6.5 6L1.5 11" fill="none" stroke="#AFB1B3" stroke-width="1.4"/></svg>
<svg style="position:absolute;left:148.8px;top:461px;" width="20" height="19" viewBox="0 0 20 19"><path d="M0 0H7.5L9 2.5H18V14H0Z" fill="#8C979D"/><rect x="10.5" y="8" width="8.5" height="10" fill="#3C3F41"/><path d="M11.5 10H18.5M11.5 12.5H18.5M11.5 15H18.5M11.5 17.5H18.5" stroke="#E0A135" stroke-width="1.3"/></svg>
<div class="t" id="t46" style="left:171.5px;top:461px;font-size:16px;line-height:16px;color:#BBBBBB;font-weight:normal;font-family:'Liberation Sans', sans-serif;transform:scaleX(0.9979);">resources</div>
<svg style="position:absolute;left:104.64999999999999px;top:487px;" width="8" height="12" viewBox="0 0 8 12"><path d="M1.5 1L6.5 6L1.5 11" fill="none" stroke="#AFB1B3" stroke-width="1.4"/></svg>
<svg style="position:absolute;left:126.35px;top:486px;" width="20" height="19" viewBox="0 0 20 19"><path d="M0 0H7.5L9 2.5H18V14H0Z" fill="#8C979D"/></svg>
<div class="t" id="t47" style="left:149.05px;top:486px;font-size:16px;line-height:16px;color:#BBBBBB;font-weight:normal;font-family:'Liberation Sans', sans-serif;transform:scaleX(1.0621);">test</div>
<div class="t" id="t48" style="left:102.9px;top:508px;font-size:22px;line-height:22px;color:#3E9ECA;font-weight:bold;font-family:'Liberation Sans', sans-serif;font-style:italic;letter-spacing:-1pxtransform:scaleX(1.1000);">m</div>
<div class="t" id="t49" style="left:126.6px;top:511px;font-size:16px;line-height:16px;color:#BBBBBB;font-weight:normal;font-family:'Liberation Sans', sans-serif;transform:scaleX(1.0471);">pom.xml</div>
<svg style="position:absolute;left:103.9px;top:534px;" width="22" height="21" viewBox="0 0 22 21"><path d="M3 6L8 1H15.5V19H3Z" fill="#919CA3"/><path d="M3 6H8V1Z" fill="#6C777E"/><rect x="0" y="10" width="19.5" height="9.5" fill="#3C3F41"/><rect x="0" y="10.5" width="19.5" height="9" fill="#3D8DAE"/><text x="1.6" y="18.3" font-family="Liberation Sans" font-size="8.2" fill="#1F3F4D" textLength="12.5" lengthAdjust="spacingAndGlyphs">MD</text></svg>
<div class="t" id="t50" style="left:126.6px;top:536px;font-size:16px;line-height:16px;color:#BBBBBB;font-weight:normal;font-family:'Liberation Sans', sans-serif;transform:scaleX(0.9482);">README.md</div>
<svg style="position:absolute;left:103.9px;top:559px;" width="22" height="21" viewBox="0 0 22 21"><path d="M3 6L8 1H15.5V19H3Z" fill="#919CA3"/><path d="M3 6H8V1Z" fill="#6C777E"/><rect x="11" y="11" width="9" height="9.5" fill="#3C3F41"/><rect x="12" y="12" width="7.5" height="7.5" fill="#231F20"/><rect x="14" y="16.5" width="3.5" height="1.3" fill="#E8E8E8"/></svg>
<div class="t" id="t51" style="left:126.6px;top:561px;font-size:16px;line-height:16px;color:#BBBBBB;font-weight:normal;font-family:'Liberation Sans', sans-serif;transform:scaleX(1.0334);">server-pic.iml</div>
<svg style="position:absolute;left:81.45px;top:584px;" width="22" height="21" viewBox="0 0 22 21"><path d="M3 6L8 1H15.5V19H3Z" fill="#919CA3"/><path d="M3 6H8V1Z" fill="#6C777E"/><circle cx="14.5" cy="16" r="5.6" fill="#3C3F41"/><circle cx="14.5" cy="16" r="4" fill="none" stroke="#AFB1B3" stroke-width="1.3"/><path d="M11.8 18.7L17.2 13.3" stroke="#AFB1B3" stroke-width="1.3"/></svg>
<div class="t" id="t52" style="left:104.15px;top:586px;font-size:16px;line-height:16px;color:#BBBBBB;font-weight:normal;font-family:'Liberation Sans', sans-serif;transform:scaleX(1.0907);">.gitignore</div>
<svg style="position:absolute;left:81.45px;top:609px;" width="22" height="21" viewBox="0 0 22 21"><path d="M3 6L8 1H15.5V19H3Z" fill="#919CA3"/><path d="M3 6H8V1Z" fill="#6C777E"/><rect x="11" y="11" width="9" height="9.5" fill="#3C3F41"/><rect x="12" y="12" width="7.5" height="7.5" fill="#231F20"/><rect x="14" y="16.5" width="3.5" height="1.3" fill="#E8E8E8"/></svg>
<div class="t" id="t53" style="left:104.15px;top:611px;font-size:16px;line-height:16px;color:#BBBBBB;font-weight:normal;font-family:'Liberation Sans', sans-serif;transform:scaleX(1.0531);">authing-demo-oauth2.iml</div>
<svg style="position:absolute;left:81.45px;top:634px;" width="22" height="21" viewBox="0 0 22 21"><path d="M3 6L8 1H15.5V19H3Z" fill="#919CA3"/><path d="M3 6H8V1Z" fill="#6C777E"/><rect x="0" y="10" width="19.5" height="9.5" fill="#3C3F41"/><rect x="0" y="10.5" width="19.5" height="9" fill="#3D8DAE"/><text x="1.6" y="18.3" font-family="Liberation Sans" font-size="8.2" fill="#1F3F4D" textLength="12.5" lengthAdjust="spacingAndGlyphs">MD</text></svg>
<div class="t" id="t54" style="left:104.15px;top:636px;font-size:16px;line-height:16px;color:#BBBBBB;font-weight:normal;font-family:'Liberation Sans', sans-serif;transform:scaleX(0.9668);">HELP.md</div>
<svg style="position:absolute;left:81.45px;top:659px;" width="22" height="21" viewBox="0 0 22 21"><path d="M3 6L8 1H15.5V19H3Z" fill="#919CA3"/><path d="M3 6H8V1Z" fill="#6C777E"/><path d="M5.5 9H13M5.5 11.5H13M5.5 14H13M5.5 16.5H10" stroke="#3C3F41" stroke-width="0.9"/></svg>
<div class="t" id="t55" style="left:104.15px;top:661px;font-size:16px;line-height:16px;color:#BBBBBB;font-weight:normal;font-family:'Liberation Sans', sans-serif;transform:scaleX(1.0244);">mvnw</div>
<svg style="position:absolute;left:81.45px;top:684px;" width="22" height="21" viewBox="0 0 22 21"><path d="M3 6L8 1H15.5V19H3Z" fill="#919CA3"/><path d="M3 6H8V1Z" fill="#6C777E"/><path d="M5.5 9H13M5.5 11.5H13M5.5 14H13M5.5 16.5H10" stroke="#3C3F41" stroke-width="0.9"/></svg>
<div class="t" id="t56" style="left:104.15px;top:686px;font-size:16px;line-height:16px;color:#BBBBBB;font-weight:normal;font-family:'Liberation Sans', sans-serif;transform:scaleX(1.0360);">mvnw.cmd</div>
<div class="t" id="t57" style="left:80.45px;top:708px;font-size:22px;line-height:22px;color:#3E9ECA;font-weight:bold;font-family:'Liberation Sans', sans-serif;font-style:italic;letter-spacing:-1pxtransform:scaleX(1.1000);">m</div>
<div class="t" id="t58" style="left:104.15px;top:711px;font-size:16px;line-height:16px;color:#BBBBBB;font-weight:normal;font-family:'Liberation Sans', sans-serif;transform:scaleX(1.0471);">pom.xml</div>
<svg style="position:absolute;left:81.45px;top:734px;" width="22" height="21" viewBox="0 0 22 21"><path d="M3 6L8 1H15.5V19H3Z" fill="#919CA3"/><path d="M3 6H8V1Z" fill="#6C777E"/><rect x="0" y="10" width="19.5" height="9.5" fill="#3C3F41"/><rect x="0" y="10.5" width="19.5" height="9" fill="#3D8DAE"/><text x="1.6" y="18.3" font-family="Liberation Sans" font-size="8.2" fill="#1F3F4D" textLength="12.5" lengthAdjust="spacingAndGlyphs">MD</text></svg>
<div class="t" id="t59" style="left:104.15px;top:736px;font-size:16px;line-height:16px;color:#BBBBBB;font-weight:normal;font-family:'Liberation Sans', sans-serif;transform:scaleX(0.9482);">README.md</div>
<svg style="position:absolute;left:37.3px;top:762px;" width="8" height="12" viewBox="0 0 8 12"><path d="M1.5 1L6.5 6L1.5 11" fill="none" stroke="#AFB1B3" stroke-width="1.4"/></svg>
<svg style="position:absolute;left:59.0px;top:760px;" width="20" height="17" viewBox="0 0 20 17"><rect x="0" y="3" width="3" height="12" fill="#8E989E"/><rect x="3.8" y="3" width="3" height="12" fill="#62B543"/><rect x="7.7" y="0" width="2.6" height="15" fill="#8E989E"/><rect x="11.4" y="3" width="2.7" height="12" fill="#40B6E0"/><rect x="15.1" y="5" width="3" height="10" fill="#8E989E"/></svg>
<div class="t" id="t60" style="left:81.7px;top:761px;font-size:16px;line-height:16px;color:#BBBBBB;font-weight:normal;font-family:'Liberation Sans', sans-serif;transform:scaleX(0.9880);">External Libraries</div>
<svg style="position:absolute;left:37.3px;top:787px;" width="8" height="12" viewBox="0 0 8 12"><path d="M1.5 1L6.5 6L1.5 11" fill="none" stroke="#AFB1B3" stroke-width="1.4"/></svg>
<svg style="position:absolute;left:59.0px;top:783px;" width="22" height="23" viewBox="0 0 22 23"><rect x="0" y="2" width="13" height="11.6" fill="#8E989E"/><path d="M2 4L5 6.5L2 9" stroke="#2B2B2B" stroke-width="1.1" fill="none"/><circle cx="12.6" cy="14.7" r="7.4" fill="#3C3F41"/><circle cx="12.6" cy="14.7" r="6.3" fill="#40B6E0"/><path d="M11.8 11V15.2L14.2 17" stroke="#1E3D4A" stroke-width="1.3" fill="none"/></svg>
<div class="t" id="t61" style="left:81.7px;top:786px;font-size:16px;line-height:16px;color:#BBBBBB;font-weight:normal;font-family:'Liberation Sans', sans-serif;transform:scaleX(0.9790);">Scratches and Consoles</div>
<div style="position:absolute;left:0;top:0;width:381px;height:1030px;overflow:hidden">
<div class="t" id="t62" style="left:259px;top:111px;font-size:16px;line-height:16px;color:#8B8B8B;font-weight:normal;font-family:'Liberation Sans', sans-serif;transform:scaleX(1.0450);">G:\work\authing\authing-demo-oauth2</div>
</div>
<svg style="position:absolute;left:394px;top:80px;" width="17" height="17" viewBox="0 0 17 17"><circle cx="8.5" cy="8.5" r="8.5" fill="#4291AD"/><path d="M11.22 6.46A3.23 3.23 0 1 0 11.22 10.54" fill="none" stroke="#22404C" stroke-width="1.3"/></svg>
<div class="t" id="t63" style="left:418px;top:83px;font-size:16px;line-height:16px;color:#BBBBBB;font-weight:normal;font-family:'Liberation Sans', sans-serif;transform:scaleX(1.0324);">PictureController.java</div>
<svg style="position:absolute;left:583px;top:83px;" width="12" height="12" viewBox="0 0 12 12"><path d="M1.5 1.5L10.5 10.5M10.5 1.5L1.5 10.5" stroke="#6E7073" stroke-width="1.1"/></svg>
<div class="t" id="t64" style="left:397px;top:113.8px;font-size:16.6667px;line-height:16.6667px;color:#606366;font-weight:normal;font-family:'Liberation Mono', monospace;">1</div>
<div class="t" id="t65" style="left:397px;top:141.32999999999998px;font-size:16.6667px;line-height:16.6667px;color:#606366;font-weight:normal;font-family:'Liberation Mono', monospace;">2</div>
<div class="t" id="t66" style="left:397px;top:168.86px;font-size:16.6667px;line-height:16.6667px;color:#606366;font-weight:normal;font-family:'Liberation Mono', monospace;">3</div>
<div class="t" id="t67" style="left:397px;top:196.39px;font-size:16.6667px;line-height:16.6667px;color:#606366;font-weight:normal;font-family:'Liberation Mono', monospace;">5</div>
<div class="t" id="t68" style="left:397px;top:223.92000000000002px;font-size:16.6667px;line-height:16.6667px;color:#606366;font-weight:normal;font-family:'Liberation Mono', monospace;">6</div>
<div class="t" id="t69" style="left:397px;top:251.45px;font-size:16.6667px;line-height:16.6667px;color:#606366;font-weight:normal;font-family:'Liberation Mono', monospace;">7</div>
<div class="t" id="t70" style="left:397px;top:278.98px;font-size:16.6667px;line-height:16.6667px;color:#606366;font-weight:normal;font-family:'Liberation Mono', monospace;">8</div>
<div class="t" id="t71" style="left:397px;top:306.51px;font-size:16.6667px;line-height:16.6667px;color:#606366;font-weight:normal;font-family:'Liberation Mono', monospace;">9</div>
<div class="t" id="t72" style="left:387px;top:334.04px;font-size:16.6667px;line-height:16.6667px;color:#606366;font-weight:normal;font-family:'Liberation Mono', monospace;">10</div>
<div class="t" id="t73" style="left:387px;top:361.57px;font-size:16.6667px;line-height:16.6667px;color:#606366;font-weight:normal;font-family:'Liberation Mono', monospace;">11</div>
<div class="t" id="t74" style="left:387px;top:389.1px;font-size:16.6667px;line-height:16.6667px;color:#606366;font-weight:normal;font-family:'Liberation Mono', monospace;">12</div>
<div class="t" id="t75" style="left:387px;top:416.63000000000005px;font-size:16.6667px;line-height:16.6667px;color:#A4A3A3;font-weight:normal;font-family:'Liberation Mono', monospace;">13</div>
<div class="t" id="t76" style="left:387px;top:444.16px;font-size:16.6667px;line-height:16.6667px;color:#606366;font-weight:normal;font-family:'Liberation Mono', monospace;">14</div>
<div class="t" id="t77" style="left:387px;top:471.69px;font-size:16.6667px;line-height:16.6667px;color:#606366;font-weight:normal;font-family:'Liberation Mono', monospace;">17</div>
<div class="t" id="t78" style="left:387px;top:499.22px;font-size:16.6667px;line-height:16.6667px;color:#606366;font-weight:normal;font-family:'Liberation Mono', monospace;">18</div>
<div class="t" id="t79" style="left:387px;top:526.75px;font-size:16.6667px;line-height:16.6667px;color:#606366;font-weight:normal;font-family:'Liberation Mono', monospace;">19</div>
<div style="position:absolute;left:532px;top:161px;width:30px;height:28px;background:#3B3B3B;"></div>
<div style="position:absolute;left:602px;top:326px;width:40px;height:28px;background:#52503A;"></div>
<div style="position:absolute;left:532px;top:354px;width:70px;height:28px;background:#52503A;"></div>
<div style="position:absolute;left:658px;top:409px;width:80px;height:27px;background:#344134;"></div>
<div style="position:absolute;left:812px;top:437px;width:30px;height:28px;background:#3B3B3B;"></div>
<div style="position:absolute;left:1272px;top:437px;width:20px;height:28px;background:#3B3B3B;"></div>
<div style="position:absolute;left:622px;top:415px;width:26px;height:16px;background:#3A3C3E;border-radius:4px"></div>
<div class="t" id="t80" style="left:462px;top:113.8px;font-size:16.6667px;line-height:16.6667px;color:#CC7832;font-weight:normal;font-family:'Liberation Mono', monospace;">package</div>
<div class="t" id="t81" style="left:532px;top:113.8px;font-size:16.6667px;line-height:16.6667px;color:#A9B7C6;font-weight:normal;font-family:'Liberation Mono', monospace;"> cn.authing.oauth.demo.pic.controller</div>
<div class="t" id="t82" style="left:902px;top:113.8px;font-size:16.6667px;line-height:16.6667px;color:#CC7832;font-weight:normal;font-family:'Liberation Mono', monospace;">;</div>
<div class="t" id="t83" style="left:462px;top:168.86px;font-size:16.6667px;line-height:16.6667px;color:#CC7832;font-weight:normal;font-family:'Liberation Mono', monospace;">import</div>
<div class="t" id="t84" style="left:522px;top:168.86px;font-size:16.6667px;line-height:16.6667px;color:#A9B7C6;font-weight:normal;font-family:'Liberation Mono', monospace;"> </div>
<div class="t" id="t85" style="left:532px;top:168.86px;font-size:16.6667px;line-height:16.6667px;color:#A9B7C6;font-weight:normal;font-family:'Liberation Mono', monospace;">...</div>
<div class="t" id="t86" style="left:462px;top:223.92000000000002px;font-size:16.6667px;line-height:16.6667px;color:#BBB529;font-weight:normal;font-family:'Liberation Mono', monospace;">@RestController</div>
<div class="t" id="t87" style="left:462px;top:251.45px;font-size:16.6667px;line-height:16.6667px;color:#CC7832;font-weight:normal;font-family:'Liberation Mono', monospace;">public class</div>
<div class="t" id="t88" style="left:582px;top:251.45px;font-size:16.6667px;line-height:16.6667px;color:#A9B7C6;font-weight:normal;font-family:'Liberation Mono', monospace;"> PictureController {</div>
<svg style="position:absolute;left:512.2px;top:280.3px;" width="10" height="10" viewBox="0 0 10 10"><path d="M5 5L5.00 0.40M5 5L9.37 3.58M5 5L7.70 8.72M5 5L2.30 8.72M5 5L0.63 3.58" stroke="#629755" stroke-width="1.35" stroke-linecap="round"/></svg>
<svg style="position:absolute;left:522.2px;top:280.3px;" width="10" height="10" viewBox="0 0 10 10"><path d="M5 5L5.00 0.40M5 5L9.37 3.58M5 5L7.70 8.72M5 5L2.30 8.72M5 5L0.63 3.58" stroke="#629755" stroke-width="1.35" stroke-linecap="round"/></svg>
<div class="t" id="t89" style="left:502px;top:278.98px;font-size:16.6667px;line-height:16.6667px;color:#629755;font-weight:normal;font-family:'Liberation Mono', monospace;font-style:italic;">/  </div>
<svg style="position:absolute;left:512.2px;top:307.8px;" width="10" height="10" viewBox="0 0 10 10"><path d="M5 5L5.00 0.40M5 5L9.37 3.58M5 5L7.70 8.72M5 5L2.30 8.72M5 5L0.63 3.58" stroke="#629755" stroke-width="1.35" stroke-linecap="round"/></svg>
<svg style="position:absolute;left:512.2px;top:335.3px;" width="10" height="10" viewBox="0 0 10 10"><path d="M5 5L5.00 0.40M5 5L9.37 3.58M5 5L7.70 8.72M5 5L2.30 8.72M5 5L0.63 3.58" stroke="#629755" stroke-width="1.35" stroke-linecap="round"/></svg>
<div class="t" id="t90" style="left:522px;top:334.04px;font-size:16.6667px;line-height:16.6667px;color:#629755;font-weight:normal;font-family:'Liberation Mono', monospace;"> </div>
<div class="t" id="t91" style="left:532px;top:334.04px;font-size:16.6667px;line-height:16.6667px;color:#629755;font-weight:normal;font-family:'Liberation Mono', monospace;font-style:italic;font-weight:bold;text-decoration:underline;text-underline-offset:2px;text-decoration-skip-ink:none">@param</div>
<div class="t" id="t92" style="left:592px;top:334.04px;font-size:16.6667px;line-height:16.6667px;color:#629755;font-weight:normal;font-family:'Liberation Mono', monospace;"> </div>
<div class="t" id="t93" style="left:602px;top:334.04px;font-size:16.6667px;line-height:16.6667px;color:#96663B;font-weight:normal;font-family:'Liberation Mono', monospace;font-style:italic;">name</div>
<svg style="position:absolute;left:512.2px;top:362.9px;" width="10" height="10" viewBox="0 0 10 10"><path d="M5 5L5.00 0.40M5 5L9.37 3.58M5 5L7.70 8.72M5 5L2.30 8.72M5 5L0.63 3.58" stroke="#629755" stroke-width="1.35" stroke-linecap="round"/></svg>
<div class="t" id="t94" style="left:522px;top:361.57px;font-size:16.6667px;line-height:16.6667px;color:#629755;font-weight:normal;font-family:'Liberation Mono', monospace;"> </div>
<div class="t" id="t95" style="left:532px;top:361.57px;font-size:16.6667px;line-height:16.6667px;color:#629755;font-weight:normal;font-family:'Liberation Mono', monospace;font-style:italic;font-weight:bold;text-decoration:underline;text-underline-offset:2px;text-decoration-skip-ink:none">@return</div>
<svg style="position:absolute;left:512.2px;top:390.4px;" width="10" height="10" viewBox="0 0 10 10"><path d="M5 5L5.00 0.40M5 5L9.37 3.58M5 5L7.70 8.72M5 5L2.30 8.72M5 5L0.63 3.58" stroke="#629755" stroke-width="1.35" stroke-linecap="round"/></svg>
<div class="t" id="t96" style="left:512px;top:389.1px;font-size:16.6667px;line-height:16.6667px;color:#629755;font-weight:normal;font-family:'Liberation Mono', monospace;font-style:italic;"> /</div>
<div class="t" id="t97" style="left:502px;top:416.63000000000005px;font-size:16.6667px;line-height:16.6667px;color:#BBB529;font-weight:normal;font-family:'Liberation Mono', monospace;">@GetMapping</div>
<div class="t" id="t98" style="left:612px;top:416.63000000000005px;font-size:16.6667px;line-height:16.6667px;color:#A9B7C6;font-weight:normal;font-family:'Liberation Mono', monospace;">(</div>
<div class="t" id="t99" style="left:648px;top:416.63000000000005px;font-size:16.6667px;line-height:16.6667px;color:#6A8759;font-weight:normal;font-family:'Liberation Mono', monospace;">"</div>
<div class="t" id="t100" style="left:658px;top:416.63000000000005px;font-size:16.6667px;line-height:16.6667px;color:#6A8759;font-weight:normal;font-family:'Liberation Mono', monospace;">pic/show</div>
<div style="position:absolute;left:657px;top:431px;width:80px;height:1px;background:#8A9AB8;"></div>
<div class="t" id="t101" style="left:738px;top:416.63000000000005px;font-size:16.6667px;line-height:16.6667px;color:#6A8759;font-weight:normal;font-family:'Liberation Mono', monospace;">")</div>
<div class="t" id="t102" style="left:748px;top:416.63000000000005px;font-size:16.6667px;line-height:16.6667px;color:#A9B7C6;font-weight:normal;font-family:'Liberation Mono', monospace;">)</div>
<div style="position:absolute;left:687px;top:411px;width:2px;height:23px;background:#BBBBBB;"></div>
<div class="t" id="t103" style="left:502px;top:444.16px;font-size:16.6667px;line-height:16.6667px;color:#CC7832;font-weight:normal;font-family:'Liberation Mono', monospace;">public</div>
<div class="t" id="t104" style="left:562px;top:444.16px;font-size:16.6667px;line-height:16.6667px;color:#A9B7C6;font-weight:normal;font-family:'Liberation Mono', monospace;"> String </div>
<div class="t" id="t105" style="left:642px;top:444.16px;font-size:16.6667px;line-height:16.6667px;color:#FFC66D;font-weight:normal;font-family:'Liberation Mono', monospace;">show</div>
<div class="t" id="t106" style="left:682px;top:444.16px;font-size:16.6667px;line-height:16.6667px;color:#A9B7C6;font-weight:normal;font-family:'Liberation Mono', monospace;">(String name) </div>
<div class="t" id="t107" style="left:822px;top:444.16px;font-size:16.6667px;line-height:16.6667px;color:#A9B7C6;font-weight:normal;font-family:'Liberation Mono', monospace;">{ </div>
<div class="t" id="t108" style="left:842px;top:444.16px;font-size:16.6667px;line-height:16.6667px;color:#CC7832;font-weight:normal;font-family:'Liberation Mono', monospace;">return </div>
<div class="t" id="t109" style="left:912px;top:444.16px;font-size:16.6667px;line-height:16.6667px;color:#6A8759;font-weight:normal;font-family:'Liberation Mono', monospace;">"pictureServer show picture"</div>
<div class="t" id="t110" style="left:1192px;top:444.16px;font-size:16.6667px;line-height:16.6667px;color:#A9B7C6;font-weight:normal;font-family:'Liberation Mono', monospace;"> + name</div>
<div class="t" id="t111" style="left:1262px;top:444.16px;font-size:16.6667px;line-height:16.6667px;color:#CC7832;font-weight:normal;font-family:'Liberation Mono', monospace;">;</div>
<div class="t" id="t112" style="left:1272px;top:444.16px;font-size:16.6667px;line-height:16.6667px;color:#A9B7C6;font-weight:normal;font-family:'Liberation Mono', monospace;"> }</div>
<div class="t" id="t113" style="left:462px;top:499.22px;font-size:16.6667px;line-height:16.6667px;color:#A9B7C6;font-weight:normal;font-family:'Liberation Mono', monospace;">}</div>
<svg style="position:absolute;left:414px;top:246px;" width="21" height="21" viewBox="0 0 21 21"><circle cx="9.3" cy="9.6" r="8.2" fill="#5B9A47"/><path d="M3.5 3.2L10.5 11.5" stroke="#313335" stroke-width="1.3"/><circle cx="13.5" cy="14.2" r="6.4" fill="#313335"/><circle cx="13.5" cy="14.2" r="5.4" fill="#3D8FB5"/><path d="M11 14.2H16.3Q16.3 11.8 13.6 11.8Q10.9 11.8 10.9 14.5Q10.9 17 13.5 17" stroke="#1E3D4A" stroke-width="1.2" fill="none"/><path d="M12.5 16.5H18.5L15.5 19.3Z" fill="#D0D0D0"/></svg>
<svg style="position:absolute;left:414px;top:440px;" width="21" height="21" viewBox="0 0 21 21"><circle cx="9.3" cy="9.6" r="8.2" fill="#5B9A47"/><path d="M3.5 3.2L10.5 11.5" stroke="#313335" stroke-width="1.3"/><circle cx="13.5" cy="13.5" r="6.4" fill="#313335"/><circle cx="13.5" cy="13.5" r="5.4" fill="#B4B8BC"/><path d="M10 12L12.5 11L14.5 12.5L16.5 11.5M11 15L12.5 17M15 14.5L16.5 16" stroke="#313335" stroke-width="1.4" fill="none"/></svg>
<svg style="position:absolute;left:448px;top:169px;" width="13" height="13" viewBox="0 0 13 13"><rect x="1.5" y="1.5" width="10" height="10" fill="#313335" stroke="#5A5D5F" stroke-width="1"/><path d="M4 6.5H9M6.5 4V9" stroke="#5A5D5F" stroke-width="1"/></svg>
<svg style="position:absolute;left:448px;top:444px;" width="13" height="13" viewBox="0 0 13 13"><rect x="1.5" y="1.5" width="10" height="10" fill="#313335" stroke="#5A5D5F" stroke-width="1"/><path d="M4 6.5H9M6.5 4V9" stroke="#5A5D5F" stroke-width="1"/></svg>
<svg style="position:absolute;left:448px;top:279px;" width="13" height="17" viewBox="0 0 13 17"><path d="M1.5 1.5H11.5V10L6.5 15.5L1.5 10Z" fill="#313335" stroke="#5A5D5F" stroke-width="1"/><path d="M4 6.5H9" stroke="#5A5D5F" stroke-width="1"/></svg>
<svg style="position:absolute;left:448px;top:385px;" width="13" height="17" viewBox="0 0 13 17"><path d="M1.5 15.5H11.5V7L6.5 1.5L1.5 7Z" fill="#313335" stroke="#5A5D5F" stroke-width="1"/><path d="M4 10.5H9" stroke="#5A5D5F" stroke-width="1"/></svg>
<svg style="position:absolute;left:472px;top:409px;" width="16" height="20" viewBox="0 0 16 20"><path d="M8 1 Q14.5 1 14.5 7.5 Q14.5 10.5 12 12.5 L11.5 14 H4.5 L4 12.5 Q1.5 10.5 1.5 7.5 Q1.5 1 8 1Z" fill="#F4AF3D"/><rect x="4.5" y="15" width="7" height="1.5" fill="#AFB1B3"/><rect x="5" y="17.5" width="6" height="1.5" fill="#AFB1B3"/></svg>
<svg style="position:absolute;left:624px;top:415px;" width="24" height="16" viewBox="0 0 24 16"><circle cx="7.5" cy="8" r="6.2" fill="#85888B"/><path d="M3 5.5Q5.5 5 6 7Q6.3 9 5 10.5Q4 12 4.5 13M8.5 2.2Q8 4.5 10.5 5.5Q12.5 6 13.2 5.5M13.5 9.5Q11 9 9.5 10.5Q8.5 12 9.5 14" stroke="#3A3C3E" stroke-width="1.5" fill="none"/><path d="M15.5 6.5L18.5 9.5L21.5 6.5" stroke="#85888B" stroke-width="1.4" fill="none"/></svg>
<svg style="position:absolute;left:533px;top:306px;" width="16" height="16" viewBox="0 0 16 16"><path d="M1 2L3 4M0.5 6L2.5 7.5M1 13L3 9M5 2H10V11H5ZM7.5 4V9M6 13L7 11M9 11L11 13M13 1.5V10M15 1V13Q15 14 13.5 14" transform="skewX(-12) translate(2 0)" fill="none" stroke="#629755" stroke-width="1.05"/></svg>
<svg style="position:absolute;left:549px;top:306px;" width="16" height="16" viewBox="0 0 16 16"><path d="M1.5 1.5L3 3M0.5 6H3V12L5 10.5M5 4H15M12 1L14 2M11 1Q11.5 10 15 14M6 7H10M8 7V11M5.5 12L10.5 10.5" transform="skewX(-12) translate(2 0)" fill="none" stroke="#629755" stroke-width="1.05"/></svg>
<svg style="position:absolute;left:564px;top:306px;" width="16" height="16" viewBox="0 0 16 16"><path d="M7 0.5L8 2M1 3.5H14M6 3.5Q6 10 2 14M6 7.5H12Q12 13 9.5 13.5" transform="skewX(-12) translate(2 0)" fill="none" stroke="#629755" stroke-width="1.05"/></svg>
<svg style="position:absolute;left:580px;top:306px;" width="16" height="16" viewBox="0 0 16 16"><path d="M1.5 1.5L3 3M0.5 6L2.5 7.5M1 13L3 9M5 4.5H14M9.5 1V8.5M4.5 8.5H15M9 8.5L6 13.5H14M12 11L14 14" transform="skewX(-12) translate(2 0)" fill="none" stroke="#629755" stroke-width="1.05"/></svg>
<svg style="position:absolute;left:607px;top:306px;" width="16" height="16" viewBox="0 0 16 16"><path d="M3 2L13 0.5M4 3L5 5M8 2.5L8.5 4.5M12 3L11 5M1.5 6.5V5H14.5V6.5M4 8H12Q10 13 3 14M6 10Q9 13 14 14" transform="skewX(-12) translate(2 0)" fill="none" stroke="#629755" stroke-width="1.05"/></svg>
<svg style="position:absolute;left:623px;top:306px;" width="16" height="16" viewBox="0 0 16 16"><path d="M4 0.5Q3 5 1 8M3 5V14M6 1.5H13V6H6ZM5.5 8.5H14M9.5 6V14M9.5 9Q8 12 5.5 13.5M9.5 9Q11 12 14 13.5" transform="skewX(-12) translate(2 0)" fill="none" stroke="#629755" stroke-width="1.05"/></svg>
<svg style="position:absolute;left:638px;top:306px;" width="16" height="16" viewBox="0 0 16 16"><path d="M3 0.5V13Q3 14 1.5 13.5M0.5 4.5H5.5M0.5 10L5.5 7.5M10 0.5L11 2M7 3H14V8H7M7 3V9Q7 12 5.5 14" transform="skewX(-12) translate(2 0)" fill="none" stroke="#629755" stroke-width="1.05"/></svg>
<svg style="position:absolute;left:654px;top:306px;" width="16" height="16" viewBox="0 0 16 16"><path d="M1.5 1.5L3 3M0.5 6L3 4.5M7 1L5.5 3.5H13L11.5 5M9 3.5Q9 5.5 6 6.5M10 4Q11 6 14 6.5M4 8H12V12H4ZM8 8V12M6.5 12L4 14M9.5 12L12 14" transform="skewX(-12) translate(2 0)" fill="none" stroke="#629755" stroke-width="1.05"/></svg>
<svg style="position:absolute;left:669px;top:306px;" width="16" height="16" viewBox="0 0 16 16"><path d="M1.5 1.5L3 3M0.5 6L2.5 7.5M1 13L3 9M5 1.5H15M5.5 1.5Q5.5 10 4 14M8 4H13V9H8ZM8 6.5H13M10.5 9V14M8.5 11L7 13M12.5 11L14 13" transform="skewX(-12) translate(2 0)" fill="none" stroke="#629755" stroke-width="1.05"/></svg>
<svg style="position:absolute;left:1806px;top:115px;" width="17" height="15" viewBox="0 0 17 15"><path d="M8.5 0.5L16.5 14.5H0.5Z" fill="#D9A517"/><path d="M8.5 4.5V10M8.5 11.5V13" stroke="#2B2B2B" stroke-width="1.8"/></svg>
<div class="t" id="t114" style="left:1825px;top:116px;font-size:16px;line-height:16px;color:#BBBBBB;font-weight:normal;font-family:'Liberation Sans', sans-serif;transform:scaleX(1.0105);">2</div>
<svg style="position:absolute;left:1847px;top:118px;" width="12" height="8" viewBox="0 0 12 8"><path d="M1 7L6 2L11 7" fill="none" stroke="#AFB1B3" stroke-width="1.5"/></svg>
<svg style="position:absolute;left:1872px;top:118px;" width="12" height="8" viewBox="0 0 12 8"><path d="M1 1L6 6L11 1" fill="none" stroke="#AFB1B3" stroke-width="1.5"/></svg>
<div style="position:absolute;left:1751px;top:156px;width:70px;height:35px;background:#3C3F41;border-radius:4px"></div>
<div class="t" id="t115" style="left:1759px;top:159px;font-size:20px;line-height:20px;color:#AFB1B3;font-weight:bold;font-family:'Liberation Sans', sans-serif;font-style:italic;letter-spacing:-1px">m</div>
<svg style="position:absolute;left:1768px;top:172px;" width="14" height="13" viewBox="0 0 14 13"><path d="M2.5 6A4.5 4.5 0 0 1 10.5 3.5M11.5 7A4.5 4.5 0 0 1 3.5 9.5" fill="none" stroke="#3DA4DB" stroke-width="1.8"/><path d="M8.5 1.5L12 3L10 6Z M5.5 11.5L2 10L4 7Z" fill="#3DA4DB"/></svg>
<svg style="position:absolute;left:1797px;top:168px;" width="12" height="12" viewBox="0 0 12 12"><path d="M1 1L11 11M11 1L1 11" stroke="#6E7073" stroke-width="1.2"/></svg>
<div style="position:absolute;left:1876px;top:358px;width:17px;height:4px;background:#D9A517;"></div>
<div style="position:absolute;left:1876px;top:386px;width:17px;height:4px;background:#D9A517;"></div>
<div style="position:absolute;left:1876px;top:441px;width:17px;height:3px;background:#0B7A1B;"></div>
<svg style="position:absolute;left:1899px;top:84px;" width="18" height="18" viewBox="0 0 18 18"><g fill="#AFB1B3"><rect x="1" y="0.5" width="16" height="4.6" rx="2.5"/><rect x="1" y="6" width="16" height="4.6" rx="2.3"/><rect x="1" y="11.5" width="16" height="5" rx="2.5"/></g></svg>
<div style="position:absolute;left:1905.5px;top:134.5px;width:0;height:0"><div class="t" id="t116" style="left:0;top:0;font-size:12.6px;line-height:12.6px;color:#BBBBBB;font-family:'Liberation Sans', sans-serif;transform-origin:0 0;transform:rotate(90deg) translate(-50%,-50%)">Database</div></div>
<div class="t" id="t117" style="left:1899px;top:187px;font-size:20px;line-height:20px;color:#AFB1B3;font-weight:bold;font-family:'Liberation Sans', sans-serif;font-style:italic;letter-spacing:-1px">m</div>
<div style="position:absolute;left:1905.5px;top:233.5px;width:0;height:0"><div class="t" id="t118" style="left:0;top:0;font-size:12.6px;line-height:12.6px;color:#BBBBBB;font-family:'Liberation Sans', sans-serif;transform-origin:0 0;transform:rotate(90deg) translate(-50%,-50%)">Maven</div></div>
<svg style="position:absolute;left:38px;top:985px;" width="13" height="15" viewBox="0 0 13 15"><path d="M1 1L12 7.5L1 14Z" fill="#AFB1B3"/></svg>
<div class="t" id="t119" style="left:59.4px;top:985.5px;font-size:14.5px;line-height:14.5px;color:#BBBBBB;font-weight:normal;font-family:'Liberation Sans', sans-serif;transform:scaleX(0.8644);">Run</div>
<svg style="position:absolute;left:108px;top:984px;" width="16" height="16" viewBox="0 0 16 16"><circle cx="8" cy="8" r="7.3" fill="#AFB1B3"/><path d="M8 3.5V9" stroke="#3C3F41" stroke-width="2.2"/><circle cx="8" cy="11.8" r="1.2" fill="#3C3F41"/></svg>
<div class="t" id="t120" style="left:129px;top:985.5px;font-size:14.5px;line-height:14.5px;color:#BBBBBB;font-weight:normal;font-family:'Liberation Sans', sans-serif;transform:scaleX(0.9208);">Problems</div>
<svg style="position:absolute;left:210px;top:983px;" width="19" height="18" viewBox="0 0 19 18"><circle cx="7.5" cy="7.5" r="6.3" fill="none" stroke="#AFB1B3" stroke-width="1.6"/><path d="M7.5 3.5V7.5L9.5 9.5" stroke="#AFB1B3" stroke-width="1.4" fill="none"/><path d="M9 8.5L18 13L9 17.5Z" fill="#AFB1B3" stroke="#3C3F41" stroke-width="1"/></svg>
<div class="t" id="t121" style="left:233px;top:985.5px;font-size:14.5px;line-height:14.5px;color:#BBBBBB;font-weight:normal;font-family:'Liberation Sans', sans-serif;transform:scaleX(0.9578);">Profiler</div>
<svg style="position:absolute;left:303px;top:984px;" width="16" height="15" viewBox="0 0 16 15"><rect x="0" y="0" width="16" height="14" fill="#AFB1B3"/><path d="M2.5 3L5.5 5.5L2.5 8M6.5 10H11" stroke="#3C3F41" stroke-width="1.4" fill="none"/></svg>
<div class="t" id="t122" style="left:324px;top:985.5px;font-size:14.5px;line-height:14.5px;color:#BBBBBB;font-weight:normal;font-family:'Liberation Sans', sans-serif;transform:scaleX(0.9490);">Terminal</div>
<svg style="position:absolute;left:402px;top:985px;" width="14" height="13" viewBox="0 0 14 13"><path d="M0 1.5H2.5M0 6H2.5M0 10.5H2.5M4 1.5H14M4 6H14M4 10.5H14" stroke="#AFB1B3" stroke-width="2"/></svg>
<div class="t" id="t123" style="left:421px;top:985.5px;font-size:14.5px;line-height:14.5px;color:#BBBBBB;font-weight:normal;font-family:'Liberation Sans', sans-serif;transform:scaleX(0.9249);">TODO</div>
<svg style="position:absolute;left:484px;top:983px;" width="17" height="18" viewBox="0 0 17 18"><circle cx="8.5" cy="3" r="2.6" fill="#AFB1B3"/><circle cx="3" cy="14" r="2.8" fill="#AFB1B3"/><circle cx="14" cy="14" r="2.8" fill="#AFB1B3"/><path d="M8.5 3L3 14M8.5 3L14 14" stroke="#AFB1B3" stroke-width="1.8"/></svg>
<div class="t" id="t124" style="left:506px;top:985.5px;font-size:14.5px;line-height:14.5px;color:#BBBBBB;font-weight:normal;font-family:'Liberation Sans', sans-serif;transform:scaleX(0.9302);">Endpoints</div>
<svg style="position:absolute;left:592px;top:983px;" width="17" height="17" viewBox="0 0 17 17"><path d="M1 3.5L6 0.5L8 2.5L6 4.5L16 14.5L14 16.5L4 6.5L2.5 8Z" fill="#AFB1B3"/></svg>
<div class="t" id="t125" style="left:614px;top:985.5px;font-size:14.5px;line-height:14.5px;color:#BBBBBB;font-weight:normal;font-family:'Liberation Sans', sans-serif;transform:scaleX(0.9178);">Build</div>
<svg style="position:absolute;left:670px;top:983px;" width="16" height="17" viewBox="0 0 16 17"><path d="M8 0.5L15.5 4L8 7.5L0.5 4Z" fill="#AFB1B3"/><path d="M0.5 7.5L8 11L15.5 7.5M0.5 11L8 14.5L15.5 11" stroke="#AFB1B3" stroke-width="1.6" fill="none"/></svg>
<div class="t" id="t126" style="left:691px;top:985.5px;font-size:14.5px;line-height:14.5px;color:#BBBBBB;font-weight:normal;font-family:'Liberation Sans', sans-serif;transform:scaleX(0.9168);">Dependencies</div>
<svg style="position:absolute;left:805px;top:983px;" width="16" height="17" viewBox="0 0 16 17"><path d="M8 1L14.5 4.75V12.25L8 16L1.5 12.25V4.75Z" fill="none" stroke="#AFB1B3" stroke-width="1"/><path d="M8 1L14.5 12.25H1.5Z" fill="none" stroke="#AFB1B3" stroke-width="1.1"/><g fill="#AFB1B3"><circle cx="8" cy="1.5" r="1.5"/><circle cx="14.2" cy="4.8" r="1.5"/><circle cx="14.2" cy="12.2" r="1.5"/><circle cx="8" cy="15.5" r="1.5"/><circle cx="1.8" cy="12.2" r="1.5"/><circle cx="1.8" cy="4.8" r="1.5"/></g></svg>
<div class="t" id="t127" style="left:826px;top:985.5px;font-size:14.5px;line-height:14.5px;color:#BBBBBB;font-weight:normal;font-family:'Liberation Sans', sans-serif;transform:scaleX(0.9219);">GraphQL</div>
<svg style="position:absolute;left:908px;top:983px;" width="16" height="17" viewBox="0 0 16 17"><path d="M8 0.5L15.5 4.5V12.5L8 16.5L0.5 12.5V4.5Z" fill="#AFB1B3"/><path d="M5.5 5L11.5 8.5L5.5 12Z" fill="#3C3F41"/></svg>
<div class="t" id="t128" style="left:930px;top:985.5px;font-size:14.5px;line-height:14.5px;color:#BBBBBB;font-weight:normal;font-family:'Liberation Sans', sans-serif;transform:scaleX(0.8811);">Services</div>
<svg style="position:absolute;left:1004px;top:984px;" width="16" height="15" viewBox="0 0 16 15"><path d="M15 0.5Q5 0 2 6Q0 10 2 13Q8 14 12 10Q15 6 15 0.5Z" fill="#AFB1B3"/><path d="M1 14.5Q5 9 11 4" stroke="#3C3F41" stroke-width="1.1" fill="none"/></svg>
<div class="t" id="t129" style="left:1025px;top:985.5px;font-size:14.5px;line-height:14.5px;color:#BBBBBB;font-weight:normal;font-family:'Liberation Sans', sans-serif;transform:scaleX(0.9303);">Spring</div>
<svg style="position:absolute;left:1798px;top:983px;" width="18" height="18" viewBox="0 0 18 18"><circle cx="9" cy="9" r="8.5" fill="#C75450"/><text x="9" y="13.5" text-anchor="middle" font-family="Liberation Sans" font-weight="bold" font-size="12" fill="#fff">4</text></svg>
<div class="t" id="t130" style="left:1820px;top:985.5px;font-size:14.5px;line-height:14.5px;color:#BBBBBB;font-weight:normal;font-family:'Liberation Sans', sans-serif;transform:scaleX(0.9263);">Event Log</div>
<svg style="position:absolute;left:6px;top:1009px;" width="18" height="18" viewBox="0 0 18 18"><rect x="4.5" y="1.5" width="11" height="11" fill="none" stroke="#AFB1B3" stroke-width="1.3"/><path d="M1.5 5V15.5H12" fill="none" stroke="#AFB1B3" stroke-width="1.3"/></svg>
<div class="t" id="t131" style="left:34.4px;top:1010px;font-size:16px;line-height:16px;color:#BBBBBB;font-weight:normal;font-family:'Liberation Sans', sans-serif;transform:scaleX(1.0285);">All files are up-to-date (today 14:46)</div>
<svg style="position:absolute;left:1469px;top:1009px;" width="18" height="17" viewBox="0 0 18 17"><path d="M0.5 0.5H6L8 11L13 0.5H17.5L9.5 16.5H4Z" fill="#AFB1B3"/></svg>
<div class="t" id="t132" style="left:1501px;top:1010px;font-size:16px;line-height:16px;color:#BBBBBB;font-weight:normal;font-family:'Liberation Sans', sans-serif;transform:scaleX(0.9614);">13:21</div>
<div class="t" id="t133" style="left:1556px;top:1010px;font-size:16px;line-height:16px;color:#BBBBBB;font-weight:normal;font-family:'Liberation Sans', sans-serif;transform:scaleX(0.8377);">CRLF</div>
<div class="t" id="t134" style="left:1608px;top:1010px;font-size:16px;line-height:16px;color:#BBBBBB;font-weight:normal;font-family:'Liberation Sans', sans-serif;transform:scaleX(0.9486);">UTF-8</div>
<div class="t" id="t135" style="left:1665px;top:1010px;font-size:16px;line-height:16px;color:#BBBBBB;font-weight:normal;font-family:'Liberation Sans', sans-serif;transform:scaleX(0.9680);">4 spaces</div>
<svg style="position:absolute;left:1740px;top:1009px;" width="16" height="17" viewBox="0 0 16 17"><path d="M4 8V4.5A3.5 3.5 0 0 1 11 4.5" fill="none" stroke="#AFB1B3" stroke-width="1.8"/><rect x="6" y="8" width="9.5" height="8" fill="#AFB1B3"/></svg>
<svg style="position:absolute;left:1768px;top:1008px;" width="24" height="20" viewBox="0 0 24 20"><path d="M4.5 15Q0.5 15 0.5 11Q0.5 7.5 4 7Q4.5 1.5 10.5 1.5Q16.5 1.5 17 7.5Q20.5 8 20.5 11.5" fill="#AFB1B3"/><text x="10.5" y="12" text-anchor="middle" font-family="Liberation Sans" font-weight="bold" font-size="10" fill="#3C3F41">?</text><circle cx="17" cy="15.5" r="3" fill="none" stroke="#AFB1B3" stroke-width="2.2" stroke-dasharray="1.6 1"/></svg>
<div style="position:absolute;left:1795px;top:1005px;width:41px;height:25px;background:#5B5E60;"></div>
<div class="t" id="t136" style="left:1804px;top:1010px;font-size:16px;line-height:16px;color:#BBBBBB;font-weight:normal;font-family:'Liberation Sans', sans-serif;transform:scaleX(1.0111);">680</div>
<div class="t" id="t137" style="left:1835.5px;top:1010px;font-size:16px;line-height:16px;color:#BBBBBB;font-weight:normal;font-family:'Liberation Sans', sans-serif;transform:scaleX(1.0342);">of 1979M</div>
</body></html>
